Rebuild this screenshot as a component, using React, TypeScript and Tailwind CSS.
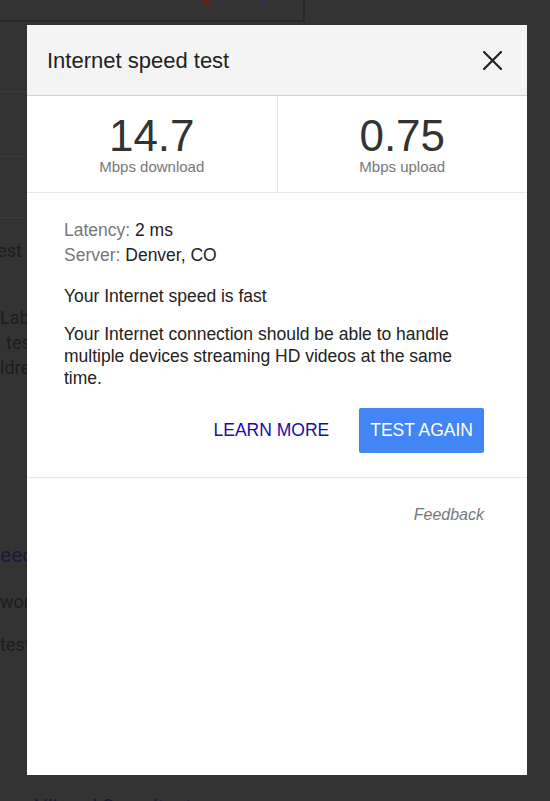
import { ReactNode } from 'react';

function Clip({ w, children, className }: { w: number; children: ReactNode; className?: string }) {
  // right-aligned text that runs off to the left edge of the page
  return (
    <div className="flex justify-end" style={{ width: w }}>
      <span className={`shrink-0 whitespace-nowrap ${className ?? ''}`}>{children}</span>
    </div>
  );
}

function CloseIcon() {
  return (
    <svg width="19" height="19" viewBox="0 0 19 19" fill="none">
      <path d="M1 1L18 18M18 1L1 18" stroke="#222" strokeWidth="2.2" strokeLinecap="square" />
    </svg>
  );
}

export default function App() {
  return (
    <div className="relative w-full h-[801px] overflow-hidden bg-[#333333] font-['Roboto',sans-serif]">
      {/* dimmed page behind the dialog */}
      <div className="flex flex-col">
        <div className="w-[305px] h-[22px] border-b-2 border-r-2 border-[#292929] bg-[#343434] flex items-start">
          <div className="ml-[204px] w-[6px] h-[5px] rounded-b-full bg-[#6e1d17]" />
          <div className="ml-[52px] w-[3px] h-[6px] rotate-[-40deg] bg-[#27395a]" />
        </div>
        <div className="h-[69px]" />
        <div className="w-[300px] h-px bg-[#3b3b3b]" />
        <div className="h-[64px]" />
        <div className="w-[300px] h-px bg-[#3b3b3b]" />
        <div className="h-[60px]" />
        <div className="w-[300px] h-px bg-[#3b3b3b]" />
        <div className="h-[21px]" />
        <Clip w={22} className="text-[18px] leading-[24px] text-[#1c1c1c]">Speed test</Clip>
        <div className="h-[42px]" />
        <div className="text-[18px] leading-[25px] text-[#1c1c1c] whitespace-nowrap">
          <div>Labs internet speed</div>
          <div className="pl-[6px]">test your connection</div>
          <div>ldress lookup</div>
        </div>
        <div className="h-[162px]" />
        <div className="text-[21px] leading-[26px] text-[#19183a] whitespace-nowrap">eed test</div>
        <div className="h-[22px]" />
        <div className="text-[18px] leading-[24px] text-[#1c1c1c] whitespace-nowrap">works on any network</div>
        <div className="h-[19px]" />
        <div className="text-[18px] leading-[24px] text-[#1c1c1c] whitespace-nowrap">test results</div>
        <div className="h-[137px]" />
        <div className="pl-[30px] text-[20px] leading-[26px] text-[#19183a] whitespace-nowrap">Allband Speedtest</div>
      </div>

      {/* dialog */}
      <div className="absolute left-[27px] top-[25px] w-[500px] h-[750px] bg-white flex flex-col font-['Liberation_Sans',Arial,sans-serif]">
        <div className="h-[71px] shrink-0 bg-[#f4f4f4] border-b border-[#cfcfcf] flex items-center justify-between pl-[20px] pr-[25px]">
          <h1 className="mt-[2px] text-[22px] leading-[28px] text-[#222]">Internet speed test</h1>
          <CloseIcon />
        </div>

        <div className="flex border-b border-[#e6e6e6]">
          <div className="flex-1 border-r border-[#e6e6e6] flex flex-col items-center pt-[18px] pb-[16px]">
            <div className="text-[44px] leading-[44px] text-[#333]">14.7</div>
            <div className="text-[15px] leading-[18px] text-[#777]">Mbps download</div>
          </div>
          <div className="flex-1 flex flex-col items-center pt-[18px] pb-[16px]">
            <div className="text-[44px] leading-[44px] text-[#333]">0.75</div>
            <div className="text-[15px] leading-[18px] text-[#777]">Mbps upload</div>
          </div>
        </div>

        <div className="pl-[37px] pr-[43px] pt-[25px] pb-[24px] border-b border-[#e8e8e8] text-[17.5px] text-[#222]">
          <p className="leading-[25px]">
            <span className="text-[#777]">Latency:</span> 2 ms
          </p>
          <p className="leading-[25px]">
            <span className="text-[#777]">Server:</span> Denver, CO
          </p>
          <p className="mt-[17px] leading-[22px]">Your Internet speed is fast</p>
          <p className="mt-[16px] leading-[22px]">
            Your Internet connection should be able to handle multiple devices streaming HD videos at the same time.
          </p>
          <div className="mt-[19px] flex items-center justify-end gap-[30px]">
            <button className="text-[17.5px] text-[#1a0dab]">LEARN MORE</button>
            <button className="h-[45px] px-[11px] rounded-[2px] bg-[#4285f4] text-white text-[17.5px]">TEST AGAIN</button>
          </div>
        </div>

        <div className="pr-[43px] pt-[25px] text-right">
          <span className="text-[16px] leading-[22px] italic text-[#777]">Feedback</span>
        </div>
      </div>
    </div>
  );
}
